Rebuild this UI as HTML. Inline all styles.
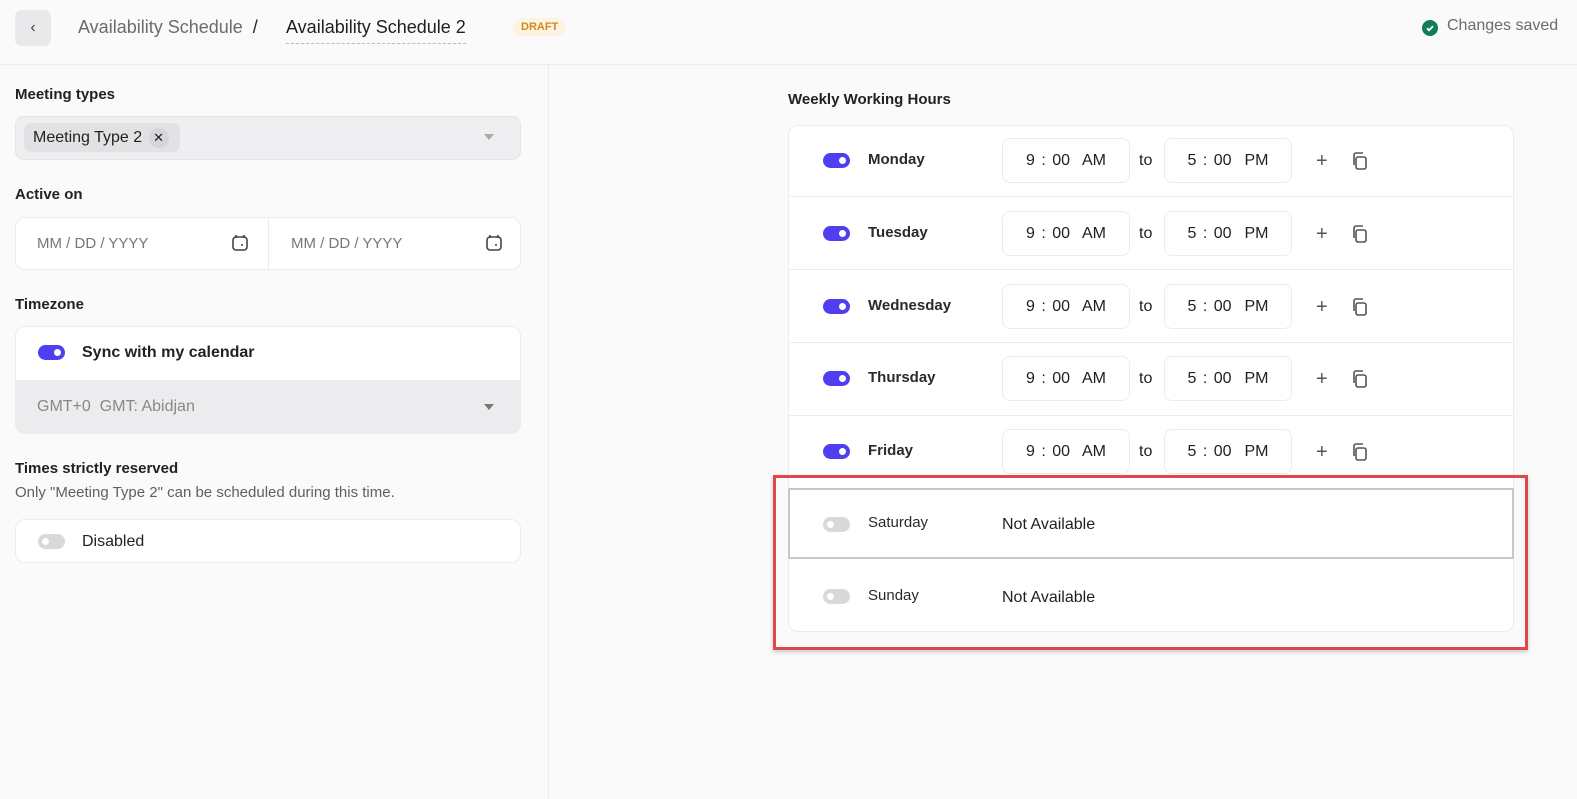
<!DOCTYPE html>
<html><head><meta charset="utf-8"><style>
*{box-sizing:border-box;margin:0;padding:0}
body{width:1577px;height:799px;background:#fafafa;font-family:"Liberation Sans",sans-serif;color:#1f1f23;position:relative;overflow:hidden}
.a{position:absolute}
.lbl{font-size:15px;font-weight:bold;color:#222}
.card{background:#fff;border:1px solid #ececee;border-radius:10px}
.tg{position:absolute;width:27px;height:15px;border-radius:8px;background:#4f3ff0}
.tg::after{content:"";position:absolute;right:4px;top:4px;width:7px;height:7px;border-radius:50%;background:#fff}
.tg.off{background:#d9d9dc}.tg.off::after{left:4px;right:auto}
.tb{position:absolute;width:128px;height:45px;border:1px solid #ececee;border-radius:8px;background:#fff;font-size:16px;text-align:center;line-height:43px;word-spacing:2px}
.day{position:absolute;font-size:15px;font-weight:bold;color:#2a2a2e}
</style></head><body>
<div class="a" style="left:15px;top:10px;width:36px;height:36px;border-radius:7px;background:#e9e9ec;text-align:center;line-height:36px;font-size:16px;color:#444">&#8249;</div>
<div class="a" style="left:78px;top:17px;font-size:18px;color:#6b6b70">Availability Schedule <span style="color:#222">&nbsp;/&nbsp;</span></div>
<div class="a" style="left:286px;top:17px;font-size:18px;color:#1f1f23;padding-bottom:5px;border-bottom:1px dashed #bbb">Availability Schedule 2</div>
<div class="a" style="left:513px;top:18px;font-size:11px;font-weight:bold;color:#d08a1c;background:#fdf3e3;border-radius:9px;padding:3px 8px">DRAFT</div>
<div class="a" style="left:1422px;top:20px;width:16px;height:16px;border-radius:50%;background:#137a5a"><svg width="16" height="16"><path d="M5 8.3l2 2 4-4" stroke="#fff" stroke-width="1.8" fill="none"/></svg></div>
<div class="a" style="left:1447px;top:17px;font-size:16px;color:#6b6b70">Changes saved</div>
<div class="a" style="left:0;top:64px;width:1577px;height:1px;background:#ececee"></div>
<div class="a" style="left:548px;top:64px;width:1px;height:735px;background:#ececee"></div>
<div class="a lbl" style="left:15px;top:86px">Meeting types</div>
<div class="a" style="left:15px;top:116px;width:506px;height:44px;border-radius:9px;background:#efeff1;border:1px solid #e4e4e7"></div>
<div class="a" style="left:24px;top:123px;width:156px;height:29px;border-radius:7px;background:#e2e2e5;font-size:16px;line-height:29px;padding-left:9px;color:#222">Meeting Type 2 <span style="display:inline-block;width:20px;height:20px;border-radius:50%;background:#d6d6da;text-align:center;line-height:20px;font-size:13px;margin-left:2px">✕</span></div>
<div class="a" style="left:484px;top:134px;border:5px solid transparent;border-top:6px solid #aaa"></div>
<div class="a lbl" style="left:15px;top:186px">Active on</div>
<div class="a card" style="left:15px;top:217px;width:506px;height:53px"></div>
<div class="a" style="left:268px;top:218px;width:1px;height:51px;background:#ececee"></div>
<div class="a" style="left:37px;top:235px;font-size:15px;color:#777">MM / DD / YYYY</div>
<div class="a" style="left:291px;top:235px;font-size:15px;color:#777">MM / DD / YYYY</div>
<svg class="a" style="left:231px;top:234px" width="18" height="18"><rect x="2" y="3" width="14" height="13" rx="3" fill="none" stroke="#444" stroke-width="1.6"/><path d="M5 1v3M13 1v3" stroke="#444" stroke-width="1.6"/><circle cx="11" cy="11" r="1" fill="#444"/></svg>
<svg class="a" style="left:485px;top:234px" width="18" height="18"><rect x="2" y="3" width="14" height="13" rx="3" fill="none" stroke="#444" stroke-width="1.6"/><path d="M5 1v3M13 1v3" stroke="#444" stroke-width="1.6"/><circle cx="11" cy="11" r="1" fill="#444"/></svg>
<div class="a lbl" style="left:15px;top:296px">Timezone</div>
<div class="a card" style="left:15px;top:326px;width:506px;height:108px;overflow:hidden"><div style="position:absolute;left:0;top:53px;width:100%;height:55px;background:#ececee"></div></div>
<div class="tg" style="left:38px;top:345px"></div>
<div class="a" style="left:82px;top:344px;font-size:16px;font-weight:bold;color:#222">Sync with my calendar</div>
<div class="a" style="left:37px;top:398px;font-size:16px;color:#888">GMT+0&nbsp; GMT: Abidjan</div>
<div class="a" style="left:484px;top:404px;border:5px solid transparent;border-top:6px solid #777"></div>
<div class="a lbl" style="left:15px;top:460px">Times strictly reserved</div>
<div class="a" style="left:15px;top:484px;font-size:15px;color:#5f5f64">Only "Meeting Type 2" can be scheduled during this time.</div>
<div class="a card" style="left:15px;top:519px;width:506px;height:44px"></div>
<div class="tg off" style="left:38px;top:534px"></div>
<div class="a" style="left:82px;top:533px;font-size:16px;color:#222">Disabled</div>
<div class="a lbl" style="left:788px;top:91px">Weekly Working Hours</div>
<div class="a card" style="left:788px;top:125px;width:726px;height:507px"></div>
<div class="a" style="left:789px;top:196px;width:724px;height:1px;background:#ececee"></div>
<div class="a" style="left:789px;top:269px;width:724px;height:1px;background:#ececee"></div>
<div class="a" style="left:789px;top:342px;width:724px;height:1px;background:#ececee"></div>
<div class="a" style="left:789px;top:415px;width:724px;height:1px;background:#ececee"></div>
<div id="rows"></div>
<div class="a" style="left:788px;top:488px;width:726px;height:71px;border:2px solid #c8c8c8"></div>
<div class="tg off" style="left:823px;top:517px"></div>
<div class="day" style="left:868px;top:514px;font-weight:normal">Saturday</div>
<div class="a" style="left:1002px;top:516px;font-size:16px">Not Available</div>
<div class="tg off" style="left:823px;top:589px"></div>
<div class="day" style="left:868px;top:587px;font-weight:normal">Sunday</div>
<div class="a" style="left:1002px;top:589px;font-size:16px">Not Available</div>
<div class="a" style="left:773px;top:475px;width:755px;height:175px;border:3px solid #e04848;box-shadow:0 2px 4px rgba(0,0,0,.2)"></div>
<script>
var d=["Monday","Tuesday","Wednesday","Thursday","Friday"],h="";
d.forEach(function(n,i){var y=125+i*72.8;
h+='<div class="tg" style="left:823px;top:'+(y+28)+'px"></div><div class="day" style="left:868px;top:'+(y+26)+'px">'+n+'</div>'+
'<div class="tb" style="left:1002px;top:'+(y+13)+'px">9 : 00&nbsp; AM</div><div class="a" style="left:1139px;top:'+(y+27)+'px;font-size:16px">to</div>'+
'<div class="tb" style="left:1164px;top:'+(y+13)+'px">5 : 00&nbsp; PM</div><div class="a" style="left:1316px;top:'+(y+25)+'px;font-size:20px;color:#555">+</div>'+
'<svg class="a" style="left:1351px;top:'+(y+27)+'px" width="17" height="18"><rect x="5" y="5" width="10" height="12" rx="2" fill="none" stroke="#555" stroke-width="1.6"/><path d="M3 13V3a2 2 0 0 1 2-2h7" fill="none" stroke="#555" stroke-width="1.6"/></svg>';});
document.getElementById("rows").innerHTML=h;
</script>
</body></html>
